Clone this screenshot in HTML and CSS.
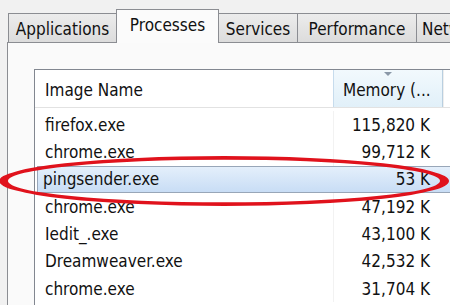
FILE: index.html
```html
<!DOCTYPE html>
<html>
<head>
<meta charset="utf-8">
<link rel="stylesheet" href="styles.css">
</head>
<body>
<div class="window">
  <div class="tabstrip">
    <div class="tab tab-apps">Applications</div>
    <div class="tab tab-proc selected">Processes</div>
    <div class="tab tab-serv">Services</div>
    <div class="tab tab-perf">Performance</div>
    <div class="tab tab-net">Networking</div>
  </div>
  <div class="panel">
    <div class="listbox">
      <div class="header">
        <div class="hcell name-col">Image Name</div>
        <div class="hcell mem-col sorted"><span class="sort-arrow"></span>Memory (...</div>
        <div class="hcell rest-col"></div>
      </div>
      <div class="rows">
        <div class="row"><div class="cell name-col">firefox.exe</div><div class="cell mem-col">115,820 K</div></div>
        <div class="row"><div class="cell name-col">chrome.exe</div><div class="cell mem-col">99,712 K</div></div>
        <div class="row selected-row"><div class="cell name-col">pingsender.exe</div><div class="cell mem-col">53 K</div></div>
        <div class="row"><div class="cell name-col">chrome.exe</div><div class="cell mem-col">47,192 K</div></div>
        <div class="row"><div class="cell name-col">Iedit_.exe</div><div class="cell mem-col">43,100 K</div></div>
        <div class="row"><div class="cell name-col">Dreamweaver.exe</div><div class="cell mem-col">42,532 K</div></div>
        <div class="row"><div class="cell name-col">chrome.exe</div><div class="cell mem-col">31,704 K</div></div>
      </div>
    </div>
  </div>
  <svg class="circle-mark" width="452" height="62" viewBox="0 0 452 62">
    <path fill="#e0121c" fill-rule="evenodd" d="M-1 31 A225 25 0 1 0 449 31 A225 25 0 1 0 -1 31 Z M8 31 A216 21.3 0 1 0 440 31 A216 21.3 0 1 0 8 31 Z"/>
  </svg>
</div>
</body>
</html>
```
FILE: styles.css
```css
html, body {
  margin: 0;
  padding: 0;
}
body {
  background: #f1f1f1;
  font-family: "DejaVu Sans Condensed", "DejaVu Sans", sans-serif;
  font-size: 17px;
  color: #111111;
  overflow: hidden;
  width: 450px;
  height: 305px;
}
.window {
  position: relative;
  width: 450px;
  height: 305px;
  overflow: hidden;
}
.tabstrip {
  display: flex;
  align-items: flex-end;
  height: 43px;
  padding-left: 8px;
  box-sizing: border-box;
  position: relative;
  z-index: 2;
  margin-bottom: -1px;
  overflow: hidden;
}
.tab {
  flex: none;
  height: 30px;
  box-sizing: border-box;
  border: 1px solid #8b8d92;
  background: linear-gradient(#ececec, #dcdcdc);
  display: flex;
  align-items: center;
  justify-content: center;
  padding-top: 2px;
  margin-left: -1px;
  white-space: nowrap;
  overflow: hidden;
}
.tab-apps { width: 109px; margin-left: 0; }
.tab-proc { width: 103px; }
.tab-serv { width: 80px; }
.tab-perf { width: 120px; }
.tab-net { width: 80px; justify-content: flex-start; padding-left: 5px; }
.tab.selected {
  height: 34px;
  background: #fbfbfb;
  border-color: #8b8d92;
  border-bottom: none;
  padding-top: 0;
  padding-bottom: 3px;
  position: relative;
  z-index: 3;
}
.panel {
  margin-left: 7px;
  border-left: 1px solid #8b8d92;
  border-top: 1px solid #8b8d92;
  background: #fafafa;
  height: 270px;
  padding: 26px 0 0 26px;
  box-sizing: border-box;
}
.listbox {
  border-left: 1px solid #828790;
  border-top: 1px solid #828790;
  background: #ffffff;
  height: 100%;
}
.header {
  display: flex;
  height: 38px;
  border-bottom: 1px solid #e2e2e2;
  box-sizing: border-box;
}
.hcell {
  display: flex;
  align-items: center;
  padding-top: 3px;
  box-sizing: border-box;
  white-space: nowrap;
}
.name-col {
  width: 298px;
  flex: none;
  padding-left: 10px;
  box-sizing: border-box;
}
.mem-col {
  width: 110px;
  flex: none;
  box-sizing: border-box;
  justify-content: flex-end;
  padding-right: 13px;
}
.hcell.mem-col {
  justify-content: flex-start;
  padding-left: 9px;
}
.sorted {
  position: relative;
  background: linear-gradient(#f2f9fd, #e1f0f9);
  border-left: 1px solid #c7dced;
  border-right: 1px solid #b9cfe0;
}
.sort-arrow {
  position: absolute;
  left: 50px;
  top: 2px;
  width: 0;
  height: 0;
  border-left: 4px solid transparent;
  border-right: 4px solid transparent;
  border-top: 4px solid #8a98a8;
}
.rest-col {
  flex: 1;
  border-left: 1px solid #eeeeee;
}
.rows {
  padding-top: 3px;
}
.row {
  display: flex;
  height: 27.33px;
  align-items: stretch;
  box-sizing: border-box;
}
.cell {
  display: flex;
  align-items: center;
  white-space: nowrap;
}
.row .mem-col {
  border-left: 1px solid #f2f2f2;
}
.selected-row {
  margin-left: 2px;
  border-top: 1px solid #98a6b8;
  border-bottom: 1px solid #98a6b8;
  border-left: 1px solid #98a6b8;
  background: linear-gradient(#e4effb, #c8ddf5);
}
.selected-row .name-col {
  width: 295px;
  padding-left: 5px;
}
.selected-row .mem-col {
  border-left: none;
}
.circle-mark {
  position: absolute;
  left: 0;
  top: 150px;
  z-index: 5;
}
```
